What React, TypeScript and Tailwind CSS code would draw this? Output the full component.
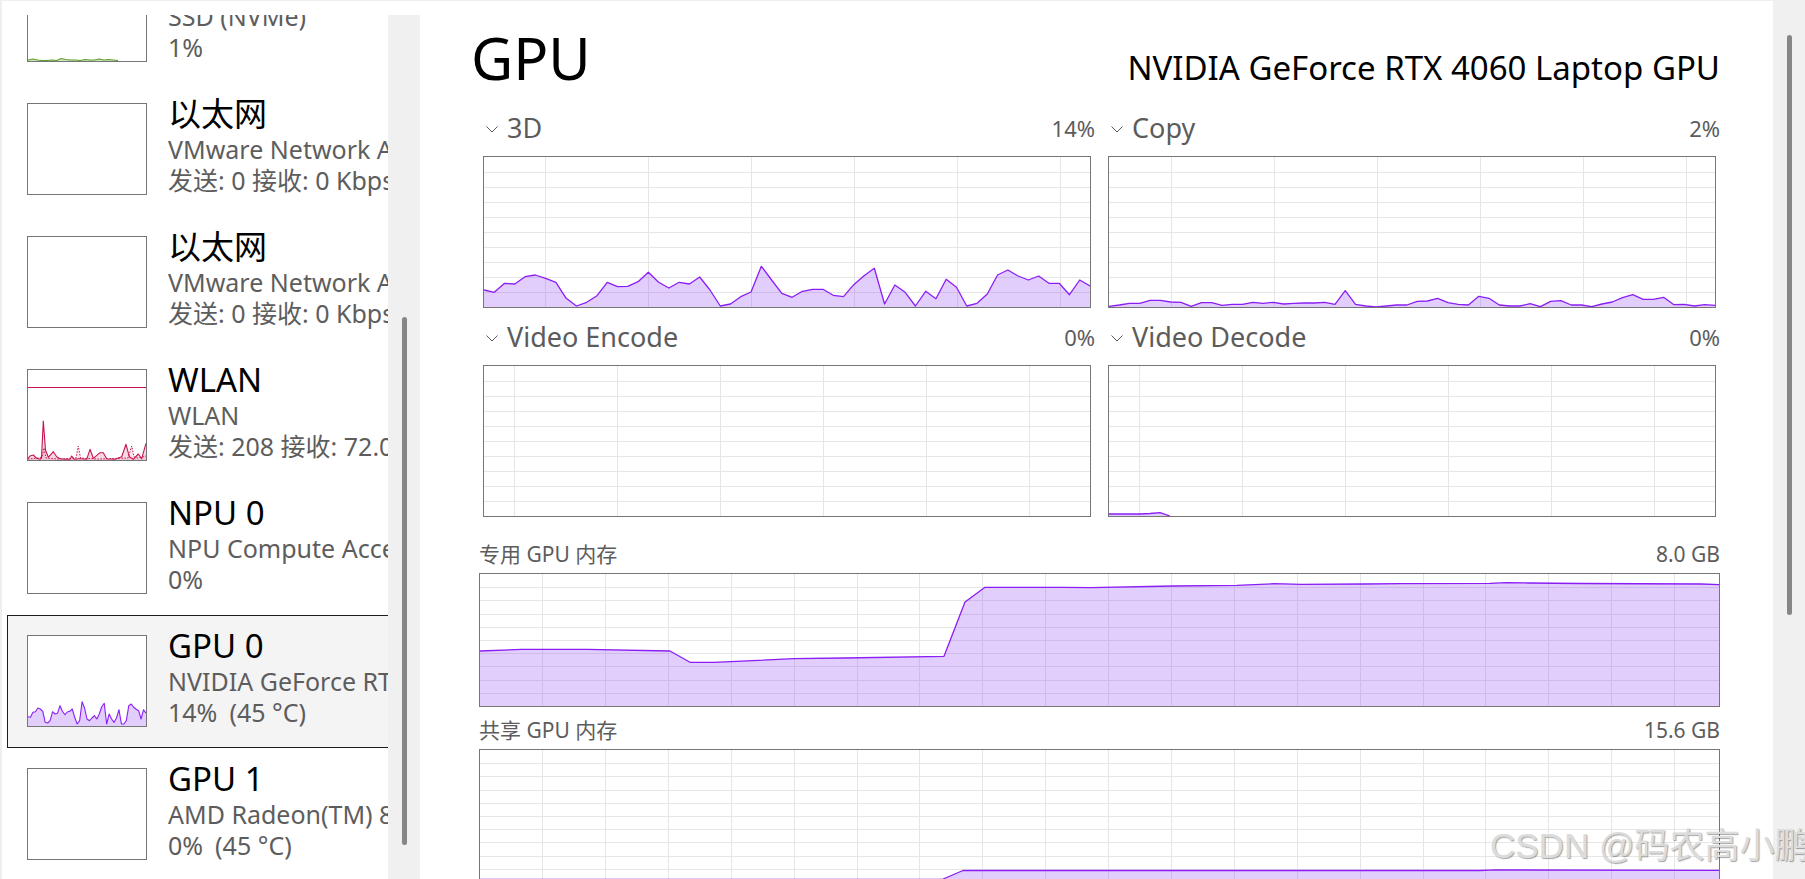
import React from "react";

type P = [number, number];

const PURPLE = "#8b1ef5";
const PURPLE_FILL = "rgba(139,60,247,0.25)";

function even(values: number[], w: number, h: number, scale = 1): P[] {
  const n = values.length;
  return values.map((v, i) => [(i * w) / (n - 1), h - v * scale] as P);
}

function areaPath(pts: P[], h: number) {
  if (!pts.length) return "";
  const body = pts.map(([x, y]) => `L${x.toFixed(2)},${y.toFixed(2)}`).join(" ");
  return `M${pts[0][0]},${h} ${body} L${pts[pts.length - 1][0]},${h} Z`;
}

function linePts(pts: P[]) {
  return pts.map(([x, y]) => `${x.toFixed(2)},${y.toFixed(2)}`).join(" ");
}

function GridChart({
  w,
  h,
  rows,
  colOff,
  colStep,
  pts,
}: {
  w: number;
  h: number;
  rows: number;
  colOff: number;
  colStep: number;
  pts: P[];
}) {
  const hLines: number[] = [];
  for (let i = 1; i < rows; i++) hLines.push(Math.round((i * h) / rows) + 0.5);
  const vLines: number[] = [];
  for (let x = colOff; x < w; x += colStep) vLines.push(Math.round(x) + 0.5);
  return (
    <svg width={w} height={h} className="block">
      {hLines.map((y) => (
        <line key={"h" + y} x1={0} x2={w} y1={y} y2={y} stroke="#e6e6e6" strokeWidth={1} />
      ))}
      {vLines.map((x) => (
        <line key={"v" + x} x1={x} x2={x} y1={0} y2={h} stroke="#e6e6e6" strokeWidth={1} />
      ))}
      {pts.length > 0 && <path d={areaPath(pts, h)} fill={PURPLE_FILL} />}
      {pts.length > 0 && (
        <polyline points={linePts(pts)} fill="none" stroke={PURPLE} strokeWidth={1.3} strokeLinejoin="round" />
      )}
    </svg>
  );
}

function Chevron() {
  return (
    <svg width="12" height="7" viewBox="0 0 12 7" className="mt-[12px] ml-[3px] shrink-0">
      <polyline points="0.5,0.5 6,6 11.5,0.5" fill="none" stroke="#5a5a5a" strokeWidth="1" />
    </svg>
  );
}

function EngineLabel({ name, value }: { name: string; value: string }) {
  return (
    <div className="h-[42px] flex items-start -mr-[4px]">
      <Chevron />
      <span className="ml-[9px] text-[27px] leading-[27px] text-[#5c5c5c]">{name}</span>
      <span className="ml-auto mt-[3px] text-[22px] leading-[22px] text-[#5c5c5c]">{value}</span>
    </div>
  );
}

function EngineCell({
  name,
  value,
  pts,
  colOff,
}: {
  name: string;
  value: string;
  pts: P[];
  colOff: number;
}) {
  return (
    <div className="flex flex-col">
      <EngineLabel name={name} value={value} />
      <div className="h-[152px] border border-[#767676] bg-white">
        <GridChart w={606} h={150} rows={10} colOff={colOff} colStep={103} pts={pts} />
      </div>
    </div>
  );
}

const d3 = [
  17, 14.7, 23.7, 23, 30.3, 32, 28.7, 24.7, 8.7, 1, 4.7, 11.3, 24.7, 20.3, 20.7, 25.3, 34.7, 24.7, 19, 24.7, 23, 30,
  17, 1, 3, 10.3, 15, 40.7, 27, 13.7, 9.7, 15.7, 17.7, 17.7, 11.7, 10.3, 22.3, 31.3, 38.7, 3, 22, 14.7, 1, 15.7, 8.3,
  27.7, 19.7, 1, 3.7, 13, 32, 37, 31, 27, 31, 23.7, 23.7, 12.3, 27, 21,
];

const copy = [
  0.7, 2, 3.7, 3.7, 6.7, 6.7, 5, 4.7, 0.7, 4.3, 4.3, 1.7, 2.7, 2.7, 4.7, 3.7, 4.7, 3, 3.7, 4, 4, 4.7, 2.7, 16.3, 2.7, 1,
  0, 1, 2, 2, 5.7, 6, 8.7, 4.3, 2.7, 2, 10.7, 8.7, 2, 1, 1, 3.3, 0.3, 5.7, 6.3, 2, 2, 0.3, 3, 5, 9.3, 12.3, 7.7, 7.7,
  9.7, 2.3, 2.7, 1, 2.3, 1.7,
];

const decode: P[] = [
  [0, 148],
  [10, 148],
  [20, 148],
  [31, 148],
  [41, 147.5],
  [51, 146.7],
  [61, 150],
];

const dedicated: P[] = [
  [0, 77],
  [42, 75.3],
  [107, 75.3],
  [190, 77],
  [210, 88.3],
  [234, 88.3],
  [314, 84.7],
  [364, 84],
  [464, 82.3],
  [485, 28],
  [505, 13.3],
  [582, 13.3],
  [611, 13.7],
  [693, 12],
  [757, 11.3],
  [794, 9.7],
  [821, 10.3],
  [885, 10],
  [921, 9.7],
  [1010, 9.3],
  [1026, 8.7],
  [1048, 9],
  [1100, 9.5],
  [1221, 10],
  [1239, 10.7],
];

const shared: P[] = [
  [0, 129.5],
  [462, 129.5],
  [483, 120.5],
  [1000, 120.5],
  [1015, 119.8],
  [1040, 120],
  [1239, 120.3],
];

const gpu0Thumb = [
  9.3, 8.7, 13.7, 14.3, 18, 17, 14.7, 3.7, 3, 5.3, 14.3, 12, 12.7, 20.3, 14.7, 11.3, 14, 14.7, 17, 8.7, 2, 5.3, 24.3, 18,
  7, 5.3, 8, 10.3, 7, 12, 19.3, 22.7, 2, 12, 7, 3.7, 8, 16.3, 2, 2, 5.3, 20.3, 22, 18.7, 16.7, 15.3, 7, 16.3, 12.7,
];

const wlanRecv: P[] = [
  [0, 88.3],
  [2, 86],
  [5.3, 85],
  [8.7, 88.3],
  [12, 89.3],
  [13.5, 88],
  [15.3, 51],
  [17.5, 80],
  [20.3, 87.3],
  [25.3, 81.7],
  [28.7, 86.7],
  [32, 88.7],
  [37, 89.3],
  [42, 89.3],
  [43.7, 86],
  [46.3, 89.3],
  [50.3, 88.7],
  [53.7, 88.7],
  [58.7, 89.3],
  [62, 79.3],
  [65.3, 88.3],
  [72, 82.7],
  [75.3, 82.7],
  [78.7, 88.7],
  [87, 89.3],
  [93.7, 86.7],
  [98, 74.3],
  [101.3, 86.7],
  [105.3, 89.3],
  [110.3, 84],
  [113.7, 88.7],
  [118, 73.3],
];

const wlanSend: P[] = [
  [0, 89],
  [10, 88],
  [14, 87],
  [16, 78],
  [18, 88],
  [30, 89],
  [48, 88],
  [50.3, 76],
  [52.5, 88],
  [70, 89],
  [100, 88],
  [103.7, 76],
  [106, 87],
  [110, 88],
  [118, 86],
];

const ssd = [1, 2, 1, 0.5, 0.5, 1, 0.5, 2.5, 1.5, 1, 1, 0.5, 1.5, 1, 1, 2, 1, 1.5, 1, 0.5];

function Thumb({ kind }: { kind: string }) {
  const w = 118;
  const h = 90;
  let content: React.ReactNode = null;
  if (kind === "gpu0") {
    const pts = even(gpu0Thumb, w, h);
    content = (
      <>
        <path d={areaPath(pts, h)} fill={PURPLE_FILL} />
        <polyline points={linePts(pts)} fill="none" stroke={PURPLE} strokeWidth={1.1} strokeLinejoin="round" />
      </>
    );
  } else if (kind === "wlan") {
    content = (
      <>
        <line x1={0} x2={w} y1={17.5} y2={17.5} stroke="#c8144b" strokeWidth={1} />
        <path d={areaPath(wlanRecv, h)} fill="rgba(200,20,75,0.16)" />
        <path d={areaPath(wlanSend, h)} fill="rgba(200,20,75,0.1)" />
        <polyline points={linePts(wlanRecv)} fill="none" stroke="#c5154d" strokeWidth={1.1} strokeLinejoin="round" />
        <polyline
          points={linePts(wlanSend)}
          fill="none"
          stroke="#c5154d"
          strokeWidth={1}
          strokeDasharray="1.5 1.5"
        />
      </>
    );
  } else if (kind === "ssd") {
    const pts = even(ssd, 90, h);
    content = (
      <>
        <path d={areaPath(pts, h)} fill="rgba(110,170,50,0.3)" />
        <polyline points={linePts(pts)} fill="none" stroke="#5e9e28" strokeWidth={1.1} />
      </>
    );
  }
  return (
    <div className="w-[120px] h-[92px] shrink-0 border border-[#767676] bg-white">
      <svg width={w} height={h} className="block">
        {content}
      </svg>
    </div>
  );
}

type Item = { title: string; sub: string; third: React.ReactNode; kind: string; selected?: boolean };

const items: Item[] = [
  { title: "磁盘 0 (C:)", sub: "SSD (NVMe)", third: "1%", kind: "ssd" },
  { title: "以太网", sub: "VMware Network Adapter VMnet1", third: "发送: 0 接收: 0 Kbps", kind: "none" },
  { title: "以太网", sub: "VMware Network Adapter VMnet8", third: "发送: 0 接收: 0 Kbps", kind: "none" },
  { title: "WLAN", sub: "WLAN", third: "发送: 208 接收: 72.0 Kbps", kind: "wlan" },
  { title: "NPU 0", sub: "NPU Compute Accelerator Device", third: "0%", kind: "none" },
  {
    title: "GPU 0",
    sub: "NVIDIA GeForce RTX 4060 Laptop GPU",
    third: (
      <>
        14%<span className="ml-[12px]">(45 °C)</span>
      </>
    ),
    kind: "gpu0",
    selected: true,
  },
  {
    title: "GPU 1",
    sub: "AMD Radeon(TM) 880M",
    third: (
      <>
        0%<span className="ml-[12px]">(45 °C)</span>
      </>
    ),
    kind: "none",
  },
];

function SideItem({ item }: { item: Item }) {
  return (
    <div
      className={
        item.selected
          ? "ml-[5px] w-[480px] h-[133px] shrink-0 border border-[#1c1c1c] bg-[#f4f4f4] pl-[19px] pt-[19px] flex items-start"
          : "ml-[5px] w-[480px] h-[133px] shrink-0 border border-transparent pl-[19px] pt-[19px] flex items-start"
      }
    >
      <Thumb kind={item.kind} />
      <div className="ml-[21px] -mt-[6px] w-[220px] overflow-hidden whitespace-nowrap">
        <div className="text-[33px] leading-[33px] text-black">{item.title}</div>
        <div className="mt-[4px] text-[25px] leading-[31px] text-[#5d5d5d]">{item.sub}</div>
        <div className="text-[25px] leading-[31px] text-[#5d5d5d]">{item.third}</div>
      </div>
    </div>
  );
}

function MemLabel({ name, value }: { name: string; value: string }) {
  return (
    <div className="h-[31px] flex items-start justify-between text-[21px] leading-[24px] text-[#5c5c5c]">
      <span>{name}</span>
      <span>{value}</span>
    </div>
  );
}

export default function App() {
  return (
    <div className="relative flex w-[1805px] h-[879px] overflow-hidden bg-white border-t border-l-2 border-[#efefef] [font-family:'Noto_Sans','Noto_Sans_CJK_SC',sans-serif]">
      {/* Left sidebar */}
      <div className="flex flex-col w-[418px] shrink-0">
        <div className="h-[14px] shrink-0" />
        <div className="flex flex-1 min-h-0">
          <div className="w-[386px] overflow-hidden">
            <div className="-mt-[65px] flex flex-col">
              {items.map((it, i) => (
                <SideItem key={i} item={it} />
              ))}
            </div>
          </div>
          <div className="w-[32px] shrink-0 bg-[#f0f0f0] pt-[302px]">
            <div className="ml-[14px] w-[5px] h-[528px] rounded-full bg-[#868686]" />
          </div>
        </div>
      </div>

      {/* Main panel */}
      <div className="flex-1 min-w-0 pl-[59px] pr-[53px] pt-[28px]">
        <div className="flex items-baseline justify-between h-[58px]">
          <span className="-ml-[8px] text-[58px] leading-[58px] text-black">GPU</span>
          <span className="text-[33px] leading-[33px] text-black">NVIDIA GeForce RTX 4060 Laptop GPU</span>
        </div>

        <div className="mt-[27px] px-[4px] grid grid-cols-2 gap-x-[17px] gap-y-[15px]">
          <EngineCell name="3D" value="14%" pts={even(d3, 606, 150)} colOff={61} />
          <EngineCell name="Copy" value="2%" pts={even(copy, 606, 150)} colOff={62} />
          <EngineCell name="Video Encode" value="0%" pts={[]} colOff={30} />
          <EngineCell name="Video Decode" value="0%" pts={decode} colOff={30} />
        </div>

        <div className="mt-[25px]">
          <MemLabel name="专用 GPU 内存" value="8.0 GB" />
          <div className="h-[134px] border border-[#767676] bg-white">
            <GridChart w={1239} h={132} rows={10} colOff={62} colStep={62.9} pts={dedicated} />
          </div>
          <div className="mt-[11px]">
            <MemLabel name="共享 GPU 内存" value="15.6 GB" />
          </div>
          <div className="h-[134px] border border-[#767676] bg-white">
            <GridChart w={1239} h={132} rows={10} colOff={62} colStep={62.9} pts={shared} />
          </div>
        </div>
      </div>

      {/* Right scroll track */}
      <div className="w-[32px] shrink-0 bg-[#f0f0f0] pt-[34px]">
        <div className="ml-[14px] w-[5px] h-[580px] rounded-full bg-[#868686]" />
      </div>

      {/* Watermark */}
      <div className="absolute left-[1488px] top-[827px] whitespace-nowrap text-[35px] leading-[35px] text-[#dcdcdc] [font-family:'Liberation_Sans','Noto_Sans_CJK_SC',sans-serif] [text-shadow:1px_1px_1px_rgba(0,0,0,0.35)]">
        CSDN @码农高小鹏
      </div>
    </div>
  );
}
